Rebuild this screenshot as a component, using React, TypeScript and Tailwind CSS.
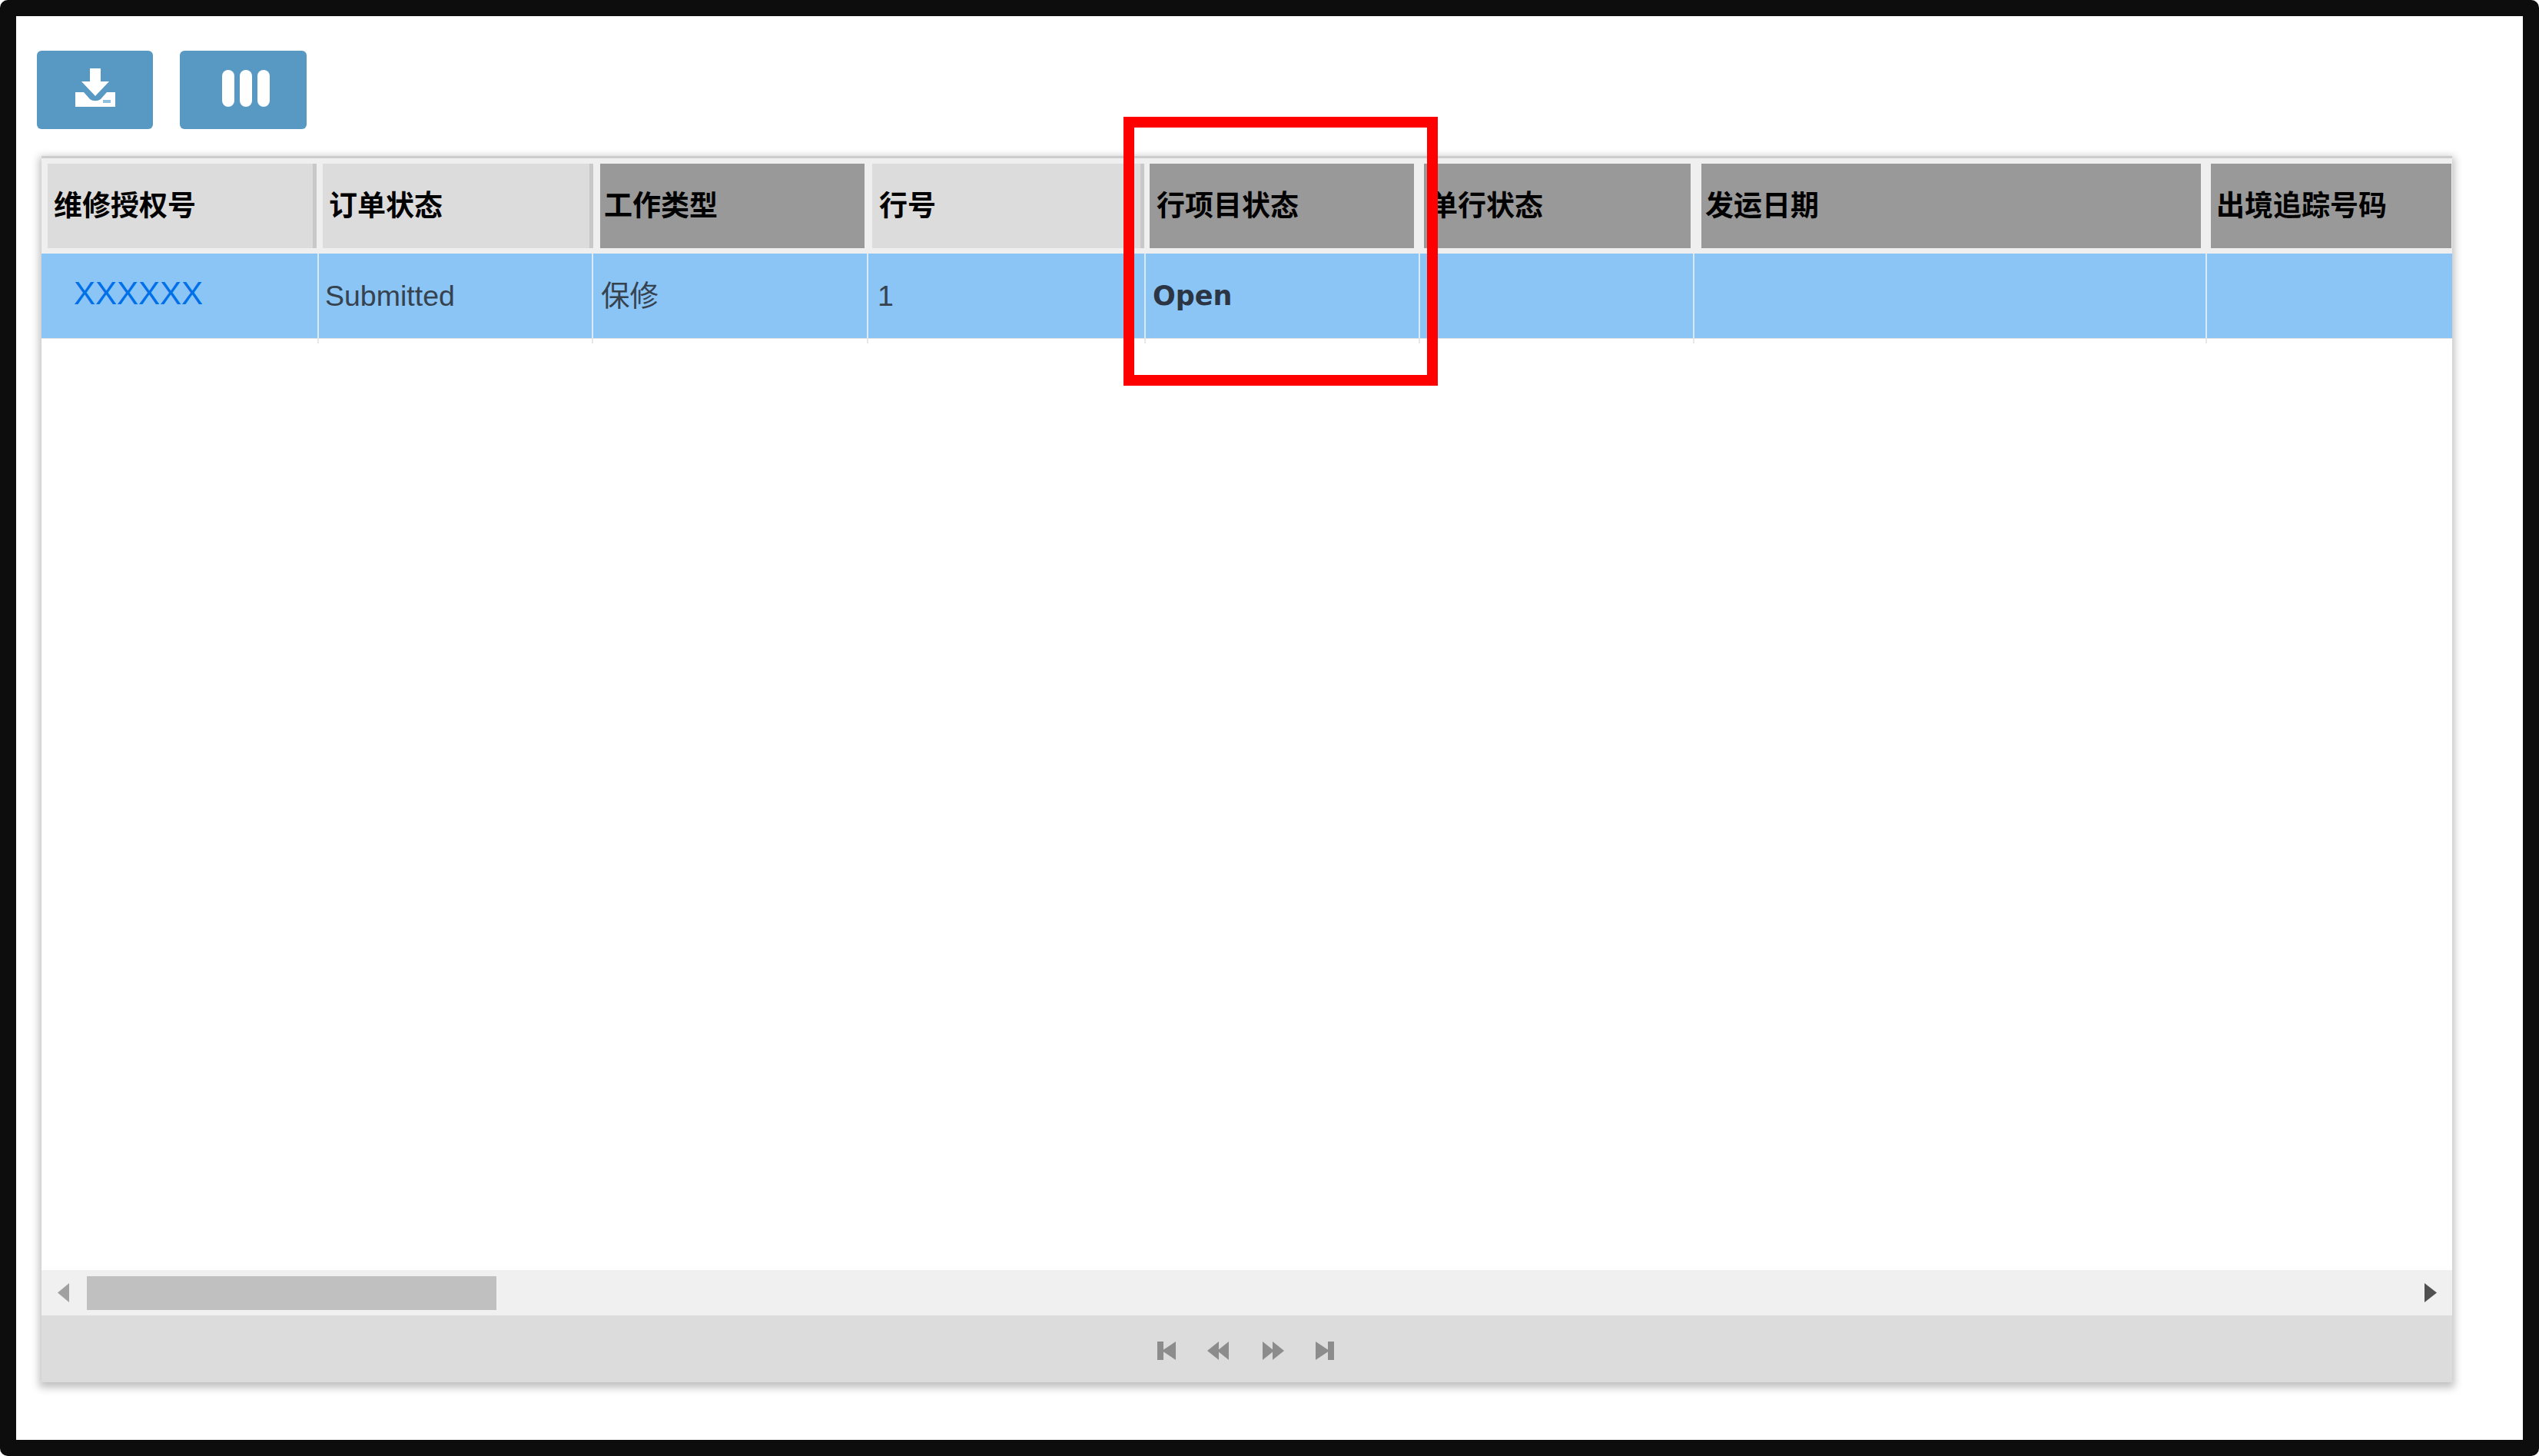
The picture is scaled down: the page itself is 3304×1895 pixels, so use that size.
const COLS = "grid grid-cols-[361px_357px_358px_361px_357px_357px_667px_319px]";
const CJK = "font-['Liberation_Sans','Noto_Sans_CJK_SC',sans-serif]";

const headers = [
  { label: "维修授权号", dark: false, outer: "pl-2 pr-[3px]", inner: "pl-2" },
  { label: "订单状态", dark: false, outer: "pl-[5px]", inner: "pl-2" },
  { label: "工作类型", dark: true, outer: "pl-[9px] pr-[5px]", inner: "pl-[5px]" },
  { label: "行号", dark: false, outer: "pl-[5px] pr-[2px]", inner: "pl-[9px]" },
  { label: "行项目状态", dark: true, outer: "pl-[5px] pr-2", inner: "pl-[9px]" },
  { label: "单行状态", dark: true, outer: "pl-[5px] pr-[5px]", inner: "pl-[7px]" },
  { label: "发运日期", dark: true, outer: "pl-[9px] pr-2", inner: "pl-[5px]" },
  { label: "出境追踪号码", dark: true, outer: "pl-[5px] pr-px", inner: "pl-[7px]" },
];

function HeaderCell({ label, dark, outer, inner }: { label: string; dark: boolean; outer: string; inner: string }) {
  return (
    <div className={outer}>
      <div
        className={
          dark
            ? `flex h-[110px] items-center overflow-hidden whitespace-nowrap bg-[#999999] pt-[2px] text-[37px] font-bold text-black ${inner}`
            : `flex h-[110px] items-center overflow-hidden whitespace-nowrap border-r-[5px] border-[#c8c8c8] bg-[#dcdcdc] pt-[2px] text-[37px] font-bold text-black ${inner}`
        }
      >
        {label}
      </div>
    </div>
  );
}

function DownloadIcon() {
  return (
    <svg width="52" height="50" viewBox="0 0 52 50" fill="#ffffff">
      <path d="M19 0h14v17h11L26 36 8 17h11z" />
      <path d="M0 31h11l8 9c4 3 10 3 14 0l8-9h11v19H0z" />
      <rect x="36" y="41" width="10" height="4" fill="#8fc0de" />
    </svg>
  );
}

function ColumnsIcon() {
  return (
    <svg width="62" height="48" viewBox="0 0 62 48" fill="#ffffff">
      <rect x="0" y="0" width="16" height="48" rx="8" />
      <rect x="23" y="0" width="16" height="48" rx="8" />
      <rect x="46" y="0" width="16" height="48" rx="8" />
    </svg>
  );
}

function PagerIcon({ type }: { type: "first" | "prev" | "next" | "last" }) {
  if (type === "first") {
    return (
      <svg width="24" height="24" viewBox="0 0 24 24" fill="#8c8c8c">
        <rect x="0" y="0" width="8" height="24" />
        <path d="M24 0v24L6 12z" />
      </svg>
    );
  }
  if (type === "last") {
    return (
      <svg width="24" height="24" viewBox="0 0 24 24" fill="#8c8c8c">
        <rect x="16" y="0" width="8" height="24" />
        <path d="M0 0v24l18-12z" />
      </svg>
    );
  }
  if (type === "prev") {
    return (
      <svg width="28" height="24" viewBox="0 0 28 24" fill="#8c8c8c">
        <path d="M15 0v24L0 12z" />
        <path d="M28 0v24L13 12z" />
      </svg>
    );
  }
  return (
    <svg width="28" height="24" viewBox="0 0 28 24" fill="#8c8c8c">
      <path d="M0 0v24l15-12z" />
      <path d="M13 0v24l15-12z" />
    </svg>
  );
}

export default function App() {
  return (
    <div className={`h-[1895px] w-[3304px] overflow-hidden rounded-[10px] bg-[#0d0d0d] p-[21px] ${CJK}`}>
      <div className="relative flex h-full flex-col bg-white pl-[27px] pt-[45px]">
        {/* toolbar */}
        <div className="flex gap-[35px]">
          <button className="flex h-[102px] w-[151px] items-center justify-center rounded-[6px] bg-[#5899c4] pb-[6px]">
            <DownloadIcon />
          </button>
          <button className="flex h-[102px] w-[165px] items-center justify-center rounded-[6px] bg-[#5899c4] pb-[4px] pl-[6px]">
            <ColumnsIcon />
          </button>
        </div>

        {/* grid */}
        <div className="ml-[6px] mt-[35px] flex h-[1596px] w-[3137px] flex-col border-t-[3px] border-[#cccccc] bg-white shadow-[0_4px_10px_3px_rgba(0,0,0,0.25)]">
          <div className={`${COLS} bg-[#efefef] py-[7px]`}>
            {headers.map((h) => (
              <HeaderCell key={h.label} label={h.label} dark={h.dark} outer={h.outer} inner={h.inner} />
            ))}
          </div>

          <div className={`${COLS} h-[110px] items-stretch bg-[#8ac5f6] text-[37.5px] text-[#37424f]`}>
            <div className="flex items-center border-r-2 border-[#dbe9f5] pb-[8px] pl-[42px] text-[42px] text-[#0070e8]">
              XXXXXX
            </div>
            <div className="flex items-center border-r-2 border-[#dbe9f5] pl-2">Submitted</div>
            <div className="flex items-center border-r-2 border-[#dbe9f5] pl-[10px]">保修</div>
            <div className="flex items-center border-r-2 border-[#dbe9f5] pl-[12px]">1</div>
            <div className="flex items-center border-r-2 border-[#dbe9f5] pl-[9px] font-['DejaVu_Sans',sans-serif] text-[35px] font-bold text-[#2b3544]">
              Open
            </div>
            <div className="border-r-2 border-[#dbe9f5]" />
            <div className="border-r-2 border-[#dbe9f5]" />
            <div />
          </div>
          <div className={`${COLS} h-[7px] border-t border-[#e2e2e2]`}>
            <div className="border-r-2 border-[#e8e8e8]" />
            <div className="border-r-2 border-[#e8e8e8]" />
            <div className="border-r-2 border-[#e8e8e8]" />
            <div className="border-r-2 border-[#e8e8e8]" />
            <div className="border-r-2 border-[#e8e8e8]" />
            <div className="border-r-2 border-[#e8e8e8]" />
            <div className="border-r-2 border-[#e8e8e8]" />
          </div>
          <div className="flex-1" />

          {/* horizontal scrollbar */}
          <div className="flex h-[59px] items-center bg-[#f0f0f0]">
            <svg className="ml-[21px]" width="15" height="25" viewBox="0 0 15 25" fill="#a0a0a0">
              <path d="M15 0v25L0 12.5z" />
            </svg>
            <div className="ml-[23px] h-[44px] w-[533px] bg-[#c0c0c0]" />
            <svg className="ml-auto mr-[20px]" width="16" height="25" viewBox="0 0 16 25" fill="#505050">
              <path d="M0 0v25l16-12.5z" />
            </svg>
          </div>

          {/* pager */}
          <div className="flex h-[87px] items-center bg-[#dcdcdc] pl-[1452px] pt-[5px]">
            <PagerIcon type="first" />
            <div className="ml-[41px]">
              <PagerIcon type="prev" />
            </div>
            <div className="ml-[44px]">
              <PagerIcon type="next" />
            </div>
            <div className="ml-[41px]">
              <PagerIcon type="last" />
            </div>
          </div>
        </div>

        {/* red highlight drawn over the grid */}
        <div className="absolute left-[1441px] top-[131px] h-[350px] w-[409px] border-[14px] border-[#ff0000]" />
      </div>
    </div>
  );
}
